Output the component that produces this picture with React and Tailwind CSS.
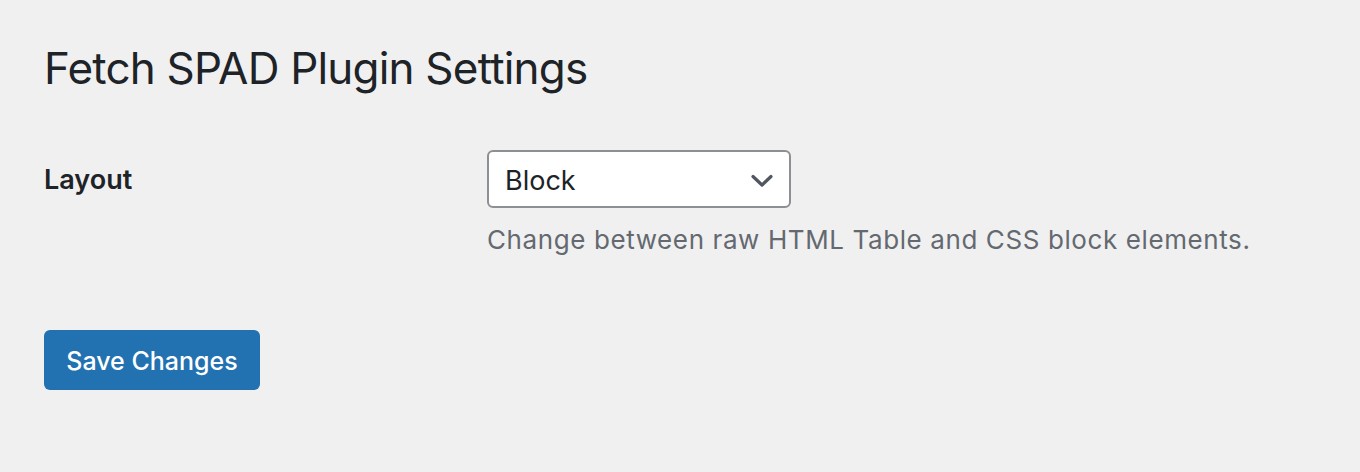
import React from 'react';

const Chevron = () => (
  <svg width="22" height="14" viewBox="0 0 22 14" fill="none" className="mt-[3px] text-[#50575e]">
    <path d="M2 2.5 11 11 20 2.5" stroke="currentColor" strokeWidth="3.2" strokeLinecap="round" strokeLinejoin="round" />
  </svg>
);

const App = () => {
  return (
    <div className="min-h-screen bg-[#f0f0f1] px-[44px] pt-[40px] text-[#1d2327] font-['Inter','Liberation_Sans',sans-serif]">
      <h1 className="text-[44px] font-normal leading-[56px] tracking-[-0.8px]">Fetch SPAD Plugin Settings</h1>

      <div className="mt-[54px] flex">
        <div className="w-[443px] pt-[12px] text-[27px] font-semibold leading-[36px]">Layout</div>
        <div className="flex flex-col">
          <div className="flex h-[58px] w-[304px] items-center justify-between rounded-[6px] border-2 border-[#8c8f94] bg-white pl-[16px] pr-[16px]">
            <span className="pt-[3px] text-[27px] leading-none">Block</span>
            <Chevron />
          </div>
          <p className="mt-[14px] text-[26px] leading-[36px] tracking-[0.6px] text-[#646970]">
            Change between raw HTML Table and CSS block elements.
          </p>
        </div>
      </div>

      <button
        type="button"
        className="mt-[72px] flex h-[60px] w-[216px] items-center justify-center rounded-[6px] bg-[#2271b1] pt-[3px] text-[25px] font-medium text-white"
      >
        Save Changes
      </button>
    </div>
  );
};

export default App;
